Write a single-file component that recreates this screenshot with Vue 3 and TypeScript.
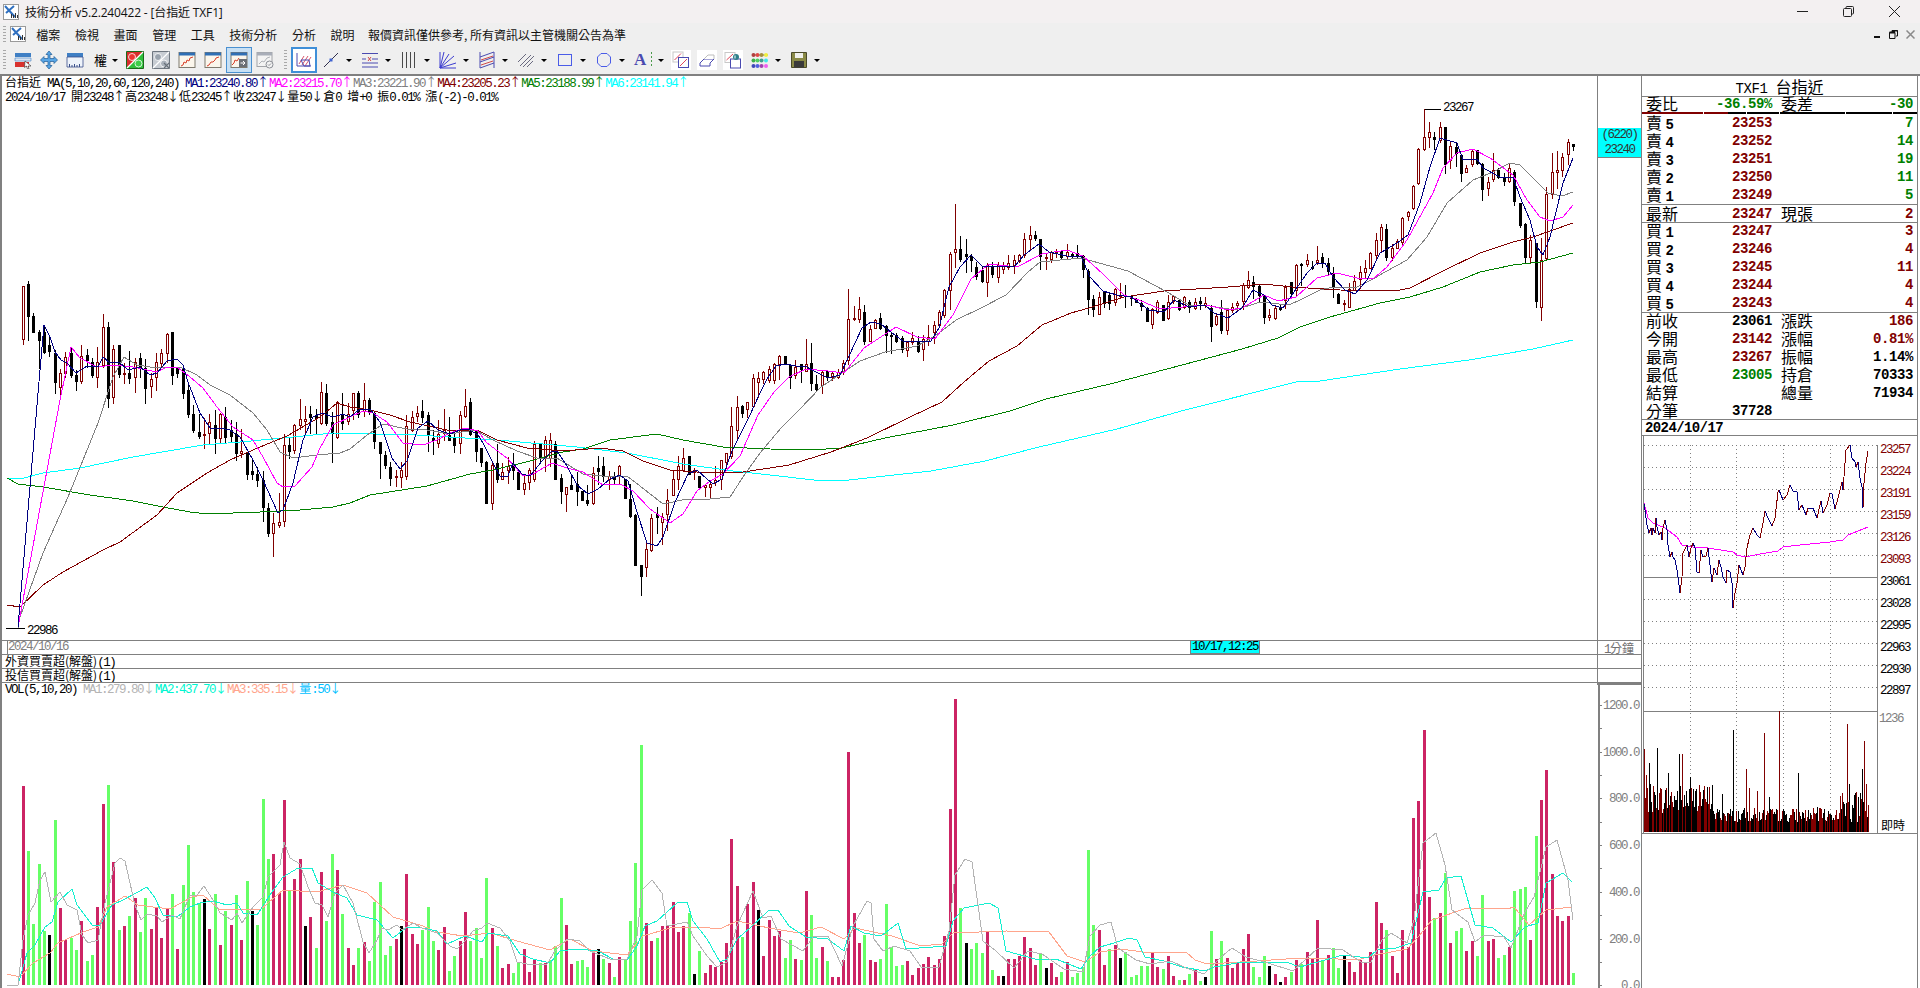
<script setup lang="ts">
const menus = ['檔案', '檢視', '畫面', '管理', '工具', '技術分析', '分析', '說明']
const notice = '報價資訊僅供參考, 所有資訊以主管機關公告為準'

const priceLegend = [
  { text: '台指近 MA(5,10,20,60,120,240) ', color: '#000' },
  { text: 'MA1:23240.80↑', color: '#000080' },
  { text: 'MA2:23215.70↑', color: '#ff00ff' },
  { text: 'MA3:23221.90↑', color: '#808080' },
  { text: 'MA4:23205.23↑', color: '#800000' },
  { text: 'MA5:23188.99↑', color: '#008000' },
  { text: 'MA6:23141.94↑', color: '#00ffff' }
]
const ohlc = '2024/10/17 開23248↑高23248↓低23245↑收23247↓量50↓倉0 增+0 振0.01% 漲(-2)-0.01%'
const volLegend = [
  { text: 'VOL(5,10,20) ', color: '#000' },
  { text: 'MA1:279.80↓', color: '#b4b4b4' },
  { text: 'MA2:437.70↓', color: '#00f5d0' },
  { text: 'MA3:335.15↓', color: '#ffa58c' },
  { text: '量:50↓', color: '#00bfff' }
]

// Latin sits on a 6px cell, CJK and arrows on a full 12px one
const runs = (text: string) =>
  (text.match(/[\u2190-\u2193\u3000-\u9fff]+|[^\u2190-\u2193\u3000-\u9fff]+/g) || []).map((t) => ({
    t,
    zh: /[\u2190-\u2193\u3000-\u9fff]/.test(t)
  }))

const candleData =
  'r 286 286 339 344;k 281 284 316 340;k 313 316 332 332;k 330 332 340 368;k 325 332 352 353;k 337 345 351 356;k 350 353 382 393;r 369 373 387 398;r 352 357 373 377;k 348 353 375 377;k 370 375 381 390;r 345 356 381 383;k 349 355 360 367;k 358 362 375 377;r 347 362 377 387;r 314 327 365 367;k 322 327 398 407;r 345 349 397 403;k 345 345 374 377;r 363 373 374 383;k 351 373 378 383;r 358 362 377 392;k 353 358 367 377;k 359 368 388 403;r 373 379 386 397;r 353 362 377 390;r 349 353 363 367;r 333 334 353 362;k 332 332 375 384;k 368 368 373 377;k 368 369 393 398;k 385 390 414 417;k 405 414 430 432;k 414 432 436 438;r 418 434 435 448;r 414 422 433 443;k 410 425 438 453;r 413 414 438 442;k 407 417 437 442;k 420 430 436 442;k 422 434 453 460;r 429 451 453 457;k 452 453 474 479;k 460 471 474 479;k 467 474 480 486;k 471 480 507 521;k 503 508 533 536;r 513 523 533 556;r 493 522 525 527;r 434 445 521 526;k 438 445 451 458;r 424 425 450 453;r 399 419 425 429;r 406 419 421 433;k 406 414 417 433;k 409 416 418 433;r 382 392 423 424;k 384 393 423 425;k 412 422 433 462;r 401 402 437 438;k 393 414 423 429;r 403 414 421 424;r 393 393 410 419;k 391 393 414 417;' +
  'r 383 400 411 416;k 398 400 411 414;k 411 413 441 448;k 442 442 453 478;k 451 455 465 468;k 462 467 478 485;r 470 476 477 486;r 462 470 477 487;r 415 426 476 479;r 411 417 430 431;r 406 413 416 421;k 400 411 417 422;k 412 415 434 451;k 430 438 440 454;r 420 434 443 447;r 409 430 433 440;k 417 435 440 440;k 434 437 445 452;r 411 415 443 453;r 389 406 416 417;k 398 402 434 435;k 430 431 451 461;k 448 448 462 466;k 461 462 503 503;r 463 465 503 509;k 444 463 479 482;r 463 472 479 479;r 457 466 470 483;k 453 465 470 479;k 472 472 489 489;r 476 483 489 494;r 468 470 482 489;r 441 444 479 481;k 444 444 457 461;r 436 440 458 471;r 433 440 458 466;k 441 444 479 479;k 474 478 491 503;r 487 487 494 511;k 476 485 489 489;k 472 484 491 505;k 491 491 500 500;k 485 500 503 505;r 467 473 503 504;k 456 468 471 484;k 457 466 476 481;r 471 476 479 489;k 472 476 479 483;r 465 466 476 484;k 479 479 498 498;k 484 499 516 517;k 514 515 565 565;k 565 565 576 595;r 542 549 567 576;r 514 518 550 551;k 507 514 517 533;r 513 517 522 544;r 489 500 514 530;r 470 479 495 495;r 456 466 479 489;r 448 458 470 471;k 456 456 474 474;r 468 470 472 479;k 476 476 487 489;r 484 485 487 496;r 480 484 487 498;r 466 480 482 485;r 460 460 479 489;r 453 453 462 468;r 407 426 456 458;r 396 407 430 438;k 405 406 413 417;r 402 402 409 417;r 374 378 406 407;r 372 378 382 397;r 371 372 379 383;r 366 369 380 382;' +
  'r 363 364 380 383;r 355 356 364 379;k 356 356 364 364;k 364 365 377 388;r 360 367 375 378;k 364 364 369 382;r 339 364 371 371;k 343 363 383 390;k 375 384 389 390;r 371 372 385 393;k 370 371 377 380;r 371 373 377 380;r 369 372 377 378;r 360 363 372 374;r 289 319 360 364;r 306 318 319 320;r 297 309 319 322;k 305 312 341 344;r 325 329 341 341;r 319 320 328 328;k 313 318 328 329;k 325 326 335 352;k 332 335 336 353;k 333 335 341 342;k 336 338 349 352;r 342 342 350 356;r 332 338 342 344;k 336 341 351 352;r 335 339 349 360;r 325 337 341 345;r 321 325 332 343;r 310 312 325 327;r 289 290 315 317;r 252 254 290 309;r 204 249 252 267;k 236 249 259 261;k 239 254 256 272;k 254 256 260 271;k 262 267 276 279;k 267 270 281 282;r 263 265 282 296;k 262 266 274 277;r 262 265 277 282;r 262 265 269 273;r 255 263 267 269;r 255 260 265 273;r 254 255 261 262;r 233 239 255 257;r 226 235 239 249;k 231 235 238 240;k 239 239 256 269;r 254 257 258 269;r 251 252 259 262;r 249 251 252 257;k 250 251 257 258;r 244 252 256 259;k 252 254 256 257;k 245 253 256 257;k 255 256 269 277;k 269 271 299 314;k 295 299 309 316;r 292 297 314 314;k 291 291 303 307;k 292 295 303 309;r 288 289 302 305;r 283 295 296 297;k 285 295 296 307;k 295 296 298 305;k 298 299 302 302;k 300 303 306 310;k 307 308 321 321;r 308 309 324 328;r 300 302 312 313;k 305 305 320 320;r 295 302 318 319;r 295 296 301 303;k 299 300 309 310;r 296 297 307 308;k 300 302 307 312;r 298 302 308 309;k 297 301 303 309;r 297 303 305 307;k 305 308 326 341;r 313 316 324 325;k 300 312 330 333;r 309 310 330 334;r 303 307 310 312;r 301 303 305 310;r 283 285 301 309;r 271 280 287 288;k 276 282 286 298;k 285 286 295 302;k 296 296 317 323;r 309 315 317 320;r 306 308 318 319;k 305 307 309 310;r 285 287 300 308;k 282 282 293 295;r 264 265 290 295;k 263 264 265 285;r 254 260 264 266;k 261 267 268 269;r 246 260 262 264;' +
  'k 253 257 263 267;k 258 263 271 274;k 267 273 287 297;k 293 294 303 303;r 300 303 304 310;r 283 289 307 307;r 275 281 290 290;r 266 272 279 288;r 260 268 272 278;r 252 253 268 268;r 233 240 255 260;r 224 227 240 252;k 224 229 257 260;r 244 248 257 260;r 239 241 248 248;r 217 218 242 245;r 211 212 216 220;r 185 186 208 209;r 148 149 183 184;r 109 137 149 150;r 122 132 137 147;k 132 137 139 149;r 122 127 140 142;k 127 127 164 173;r 142 146 160 168;k 143 147 153 166;k 154 155 173 181;r 165 168 172 172;r 149 151 164 166;k 150 150 163 164;k 163 164 189 200;r 177 182 188 195;r 153 170 179 181;k 168 170 177 178;k 173 178 181 185;r 164 168 181 182;k 170 172 201 205;k 203 203 225 227;k 223 224 257 262;r 235 240 257 262;k 243 243 301 307;r 238 260 307 320;r 187 194 258 259;r 153 172 194 198;r 151 170 172 188;r 153 157 170 176;r 139 142 154 164;k 144 144 146 150'

const volumeData =
  'r199 g134 g61 g121 g54 k50 g165 r77 r45 g47 g35 r64 g24 g30 r78 r181 g200 r123 g55 r59 g69 r87 g53 g87 r56 r78 r47 r76 g91 r36 g100 g140 g93 g82 k86 r56 g91 r40 g74 r60 g90 r45 g104 k74 g60 g186 g126 r131 r92 r185 g95 r106 r126 k59 r68 g37 r113 g64 g131 r115 g71 r37 r20 g37 r43 g24 g83 g103 g30 g39 r46 k59 r111 r51 r41 ' +
  'g55 g78 g44 r35 r58 g14 g29 r44 r73 g44 g57 g27 g107 r57 g39 r17 r21 g12 g22 r36 r13 r26 g22 r22 g25 g39 g87 r60 r21 g24 g25 g18 r34 k36 g26 r22 g8 r28 g26 g64 g122 g240 r62 r44 g47 r59 r60 r83 r53 r59 g72 k11 g34 r12 r20 r18 r23 r42 r146 r99 g48 r81 r103 k75 r29 r65 ' +
  'r49 r54 g27 g45 r26 g25 r94 g70 g27 r38 g24 r8 r8 r25 r233 r72 r42 g50 r25 r23 g26 g81 g38 g19 g20 r24 r10 r17 r21 r28 r20 r26 r49 r176 r286 g77 k42 g36 g42 g32 r54 g15 r9 k9 r26 r26 r29 r48 r37 r20 g32 k17 r22 r8 g13 r23 g8 g12 g18 g135 g60 r55 r20 g36 r40 k27 g33 g8 g10 g19 g19 r33 r18 g16 r29 r9 g5 r5 g11 r15 g4 k8 g54 r26 g44 r27 r17 r22 r36 r51 g18 g8 g29 k19 r11 k3 r8 g13 r25 g21 r33 r26 r65 ' +
  'g24 r30 g37 g17 k29 r23 r13 r25 r23 r33 r83 r62 g55 r29 r12 r55 r38 r167 r184 r255 r88 g67 r72 g112 r42 g54 g57 r34 r44 g29 g90 r44 r46 g27 g30 r38 g94 g96 g98 r45 g149 r185 r215 r111 r69 r64 r69 g12'

const MA1 =
  '18,627 40,370 44,325 50,337 55,352 61,360 67,363 76,373 87,366 98,367 103,357 110,363 119,362 128,370 140,367 150,375 157,373 167,361 177,359 183,365 188,382 200,413 210,428 220,428 230,430 240,437 253,460 263,480 278,513 283,510 293,483 303,440 313,417 322,413 333,417 343,414 350,417 360,409 370,409 380,422 392,458 400,469 407,461 418,428 428,421 438,430 450,434 460,430 468,429 478,435 483,443 493,463 500,476 508,476 513,463 522,474 530,476 542,461 552,451 557,451 567,466 577,485 588,494 598,489 610,479 620,475 628,481 637,512 647,543 657,546 663,537 675,502 688,474 697,470 707,479 713,484 722,479 732,451 750,415 760,393 767,379 776,366 785,364 796,366 805,366 814,371 828,378 840,375 849,356 862,328 871,322 881,324 892,333 903,341 917,342 931,341 939,328 949,287 960,267 971,255 983,267 997,266 1014,267 1024,255 1039,244 1049,252 1067,256 1081,256 1090,277 1103,291 1117,295 1131,297 1149,310 1164,312 1174,300 1189,307 1205,305 1214,313 1228,318 1242,308 1253,290 1264,295 1272,305 1283,308 1292,295 1307,273 1317,263 1325,263 1333,277 1345,290 1355,294 1367,280 1380,253 1397,243 1408,235 1420,203 1430,167 1440,138 1457,143 1463,160 1477,159 1483,168 1500,177 1513,177 1520,197 1530,220 1537,247 1543,255 1550,237 1563,183 1573,158'
const MA2 =
  '18,627 60,400 71,347 80,358 97,367 113,365 133,367 157,372 167,367 177,367 190,377 203,388 217,407 233,427 253,440 263,457 277,483 283,487 295,486 312,467 320,448 333,425 350,417 363,411 373,413 387,422 403,443 423,445 437,440 450,433 465,428 478,431 487,443 507,458 523,476 533,474 552,463 567,468 583,472 603,485 620,484 633,491 650,509 670,523 683,514 697,491 710,481 723,474 740,456 758,415 774,392 789,377 806,369 828,371 844,373 864,348 896,327 917,337 935,339 953,315 971,279 989,264 1017,267 1042,254 1067,250 1083,256 1103,274 1124,295 1139,300 1160,309 1206,305 1228,310 1242,308 1264,295 1278,301 1296,297 1317,278 1337,273 1357,278 1373,279 1387,267 1407,240 1433,193 1443,168 1457,153 1473,149 1490,158 1513,175 1527,200 1540,217 1550,221 1563,217 1573,205'
const MA3 =
  '7,628 18,628 20,617 43,553 68,497 98,423 113,377 124,357 137,365 157,368 180,367 197,375 210,385 230,395 253,413 267,430 280,452 293,458 317,455 340,453 350,449 367,435 383,424 407,429 427,430 450,434 475,430 493,440 517,451 537,458 557,458 583,474 603,476 627,476 640,486 663,504 687,499 710,499 730,497 745,474 760,453 781,428 799,410 821,387 842,373 860,361 885,352 917,346 935,336 956,320 981,308 1006,295 1028,272 1040,262 1081,258 1128,271 1167,292 1189,305 1210,306 1235,310 1260,302 1289,305 1300,300 1320,290 1333,287 1357,287 1373,279 1385,272 1407,260 1427,237 1447,203 1473,180 1493,172 1510,163 1520,165 1533,178 1548,193 1562,196 1573,192'
const MA4 =
  '7,605 20,607 43,585 63,572 103,550 120,542 157,515 177,493 207,473 230,460 260,447 287,436 320,417 337,403 350,407 370,410 390,415 410,422 447,430 477,430 497,440 527,448 563,451 600,448 623,451 643,461 670,470 710,473 743,472 770,468 789,465 831,452 867,438 910,417 942,402 964,382 989,361 1017,346 1042,325 1071,313 1089,308 1124,297 1164,291 1228,287 1264,284 1292,287 1340,290 1380,291 1400,290 1410,288 1443,271 1480,253 1513,242 1533,237 1573,223'
const MA5 =
  '7,478 18,484 43,487 90,495 133,501 163,507 190,512 207,514 260,512 300,510 333,507 350,503 370,495 427,486 470,474 493,470 530,461 563,452 583,449 610,440 657,434 683,440 723,447 770,449 810,450 842,448 885,438 953,425 1010,411 1046,399 1110,384 1167,369 1242,349 1278,338 1300,327 1330,317 1380,303 1410,297 1443,287 1480,272 1513,265 1540,262 1573,253'
const MA6 =
  '7,478 20,479 43,473 80,468 133,457 203,445 240,442 283,438 333,433 417,435 497,440 577,447 627,453 683,464 733,471 770,475 814,480 849,480 885,476 931,471 985,461 1039,447 1117,429 1185,410 1296,382 1320,381 1400,369 1469,360 1533,349 1573,340'

const VMA1 =
  '7,985 18,985 23,940 28,915 35,903 40,880 45,872 51,902 60,892 67,905 77,910 82,935 88,943 98,940 105,903 115,863 120,858 125,861 135,905 141,920 147,914 157,916 162,922 172,915 180,919 190,895 197,895 204,886 213,900 220,913 232,920 237,913 242,923 253,907 263,897 268,877 280,865 284,842 290,858 300,864 308,887 315,903 322,905 328,917 335,893 343,885 353,903 363,942 369,953 377,940 382,928 388,930 397,925 402,930 413,923 422,928 437,933 450,946 457,949 465,941 473,931 482,928 487,923 500,928 510,941 517,962 527,964 547,964 555,951 567,939 580,941 590,951 610,959 627,959 637,936 642,890 652,880 662,893 667,926 687,922 693,936 707,956 717,967 727,962 737,926 753,891 763,918 771,916 781,939 803,951 814,936 828,936 842,966 853,926 867,901 871,903 874,939 883,951 894,946 910,951 921,967 939,967 949,931 955,875 965,859 972,862 983,941 996,951 1014,968 1028,951 1042,954 1064,969 1083,972 1090,936 1100,925 1111,922 1118,948 1136,960 1150,964 1171,961 1186,968 1204,974 1221,957 1232,948 1246,957 1268,963 1293,971 1318,948 1343,950 1361,962 1371,962 1382,940 1391,933 1407,943 1414,920 1423,843 1436,833 1445,865 1452,910 1468,922 1475,942 1484,935 1504,937 1511,948 1525,912 1534,897 1546,847 1557,840 1568,880 1573,920'
const VMA2 =
  '7,985 18,985 27,953 35,945 45,927 52,922 58,902 72,889 77,905 93,926 100,925 112,905 125,899 147,887 155,898 163,915 177,917 190,907 200,903 213,901 227,905 237,903 243,913 257,915 272,892 283,877 298,868 312,868 318,883 333,892 347,898 357,915 377,920 393,938 407,927 422,928 437,931 447,944 465,936 482,942 488,933 508,936 520,954 533,959 550,963 560,951 577,949 598,951 613,959 628,959 637,946 645,926 657,921 677,903 687,902 693,921 707,939 720,962 727,959 737,939 750,928 769,910 778,910 789,926 806,937 828,939 844,951 851,926 864,933 881,936 898,923 906,949 946,946 953,921 964,908 989,903 998,908 1006,951 1035,959 1056,959 1081,969 1090,956 1100,947 1114,943 1129,938 1137,940 1145,957 1164,961 1182,967 1205,971 1214,967 1243,962 1286,962 1300,967 1314,963 1343,955 1368,958 1377,950 1396,948 1411,943 1423,892 1439,890 1446,878 1461,876 1475,925 1493,928 1511,942 1525,927 1538,923 1546,883 1563,873 1572,882'
const VMA3 =
  '7,974 20,977 33,963 50,953 58,943 83,932 98,927 107,907 125,896 138,905 153,907 170,909 192,897 203,895 220,910 247,909 260,910 283,890 317,892 343,885 367,893 393,917 423,926 437,932 463,936 490,933 517,941 550,950 570,939 593,951 627,955 643,936 670,928 700,927 720,929 737,921 769,928 799,933 821,927 844,939 855,928 892,936 921,946 942,944 953,933 1006,931 1049,932 1067,956 1085,962 1100,952 1121,949 1143,952 1186,952 1195,960 1207,964 1257,961 1286,959 1318,958 1357,960 1375,955 1407,949 1418,937 1432,920 1464,909 1479,908 1507,909 1514,907 1529,925 1546,910 1572,907'

const slot = (i: number, n: number) => Math.floor(23.34 + (i * 1550) / (n - 1))

const candles = candleData.split(';').map((c) => c.split(' '))
const wicks: Record<string, string> = { r: '', k: '' }
const bodies: Record<string, string> = { r: '', k: '' }
let hollow = ''
candles.forEach((c, i) => {
  const x = slot(i, candles.length)
  const [hi, top, bot, lo] = c.slice(1).map(Number)
  wicks[c[0]] += `M${x + 0.5} ${hi}V${lo + 1}`
  const h = Math.max(bot - top, 1) + 1
  bodies[c[0]] += `M${x - 1} ${top}h3v${h}h-3z`
  if (c[0] === 'r' && h > 2) hollow += `M${x} ${top + 1}h1v${h - 2}h-1z`
})

const barColors: Record<string, string> = { r: '#cc2464', g: '#66ff66', k: '#000' }
const volTokens = volumeData.split(' ')
const volBars = volTokens.map((v, i) => ({
  x: slot(i, volTokens.length) - 1,
  y: 985 - Number(v.slice(1)),
  h: Number(v.slice(1)),
  fill: barColors[v[0]]
}))

const volTicks = Array.from({ length: 13 }, (_, i) => 705 + i * 23.35)
const volLabels = ['1200.0', '1000.0', '800.0', '600.0', '400.0', '200.0', '0.0']

// order book
const sells = [
  { n: 5, p: 23253, q: 7 },
  { n: 4, p: 23252, q: 14 },
  { n: 3, p: 23251, q: 19 },
  { n: 2, p: 23250, q: 11 },
  { n: 1, p: 23249, q: 5 }
]
const buys = [
  { n: 1, p: 23247, q: 3 },
  { n: 2, p: 23246, q: 4 },
  { n: 3, p: 23245, q: 11 },
  { n: 4, p: 23244, q: 4 },
  { n: 5, p: 23243, q: 4 }
]
const stats = [
  { a: '前收', av: '23061', ac: '', b: '漲跌', bv: '186', bc: 'up' },
  { a: '今開', av: '23142', ac: 'up', b: '漲幅', bv: '0.81%', bc: 'up' },
  { a: '最高', av: '23267', ac: 'up', b: '振幅', bv: '1.14%', bc: '' },
  { a: '最低', av: '23005', ac: 'down', b: '持倉', bv: '70333', bc: '' },
  { a: '結算', av: '', ac: '', b: '總量', bv: '71934', bc: '' },
  { a: '分筆', av: '37728', ac: '', b: '', bv: '', bc: '' }
]

// intraday panel, zoomed trace
const intraRaw: [number, number][] = [
  [73, 252], [75, 270], [80, 315], [88, 340], [92, 325], [96, 345], [100, 325], [104, 340], [108, 295], [112, 320], [116, 345], [122, 335], [126, 360], [130, 325], [136, 300], [140, 330], [145, 375], [150, 410], [155, 395], [160, 410], [165, 420], [170, 450], [175, 470], [179, 520], [186, 470], [190, 400], [200, 375], [207, 410], [212, 385], [218, 370], [224, 385], [230, 455], [238, 458], [242, 390], [250, 412], [258, 408], [265, 385], [270, 435], [275, 485], [282, 445], [290, 465], [298, 420], [302, 440], [308, 470], [318, 488], [322, 450], [330, 455], [335, 490], [340, 565], [345, 520], [352, 490], [358, 435], [368, 465], [375, 440], [382, 385], [390, 345], [400, 325], [412, 345], [420, 355], [428, 310], [435, 272], [445, 295], [455, 318], [465, 295], [473, 215], [478, 210], [488, 240], [500, 225], [510, 195], [520, 212], [530, 215], [537, 270], [545, 255], [558, 285], [565, 265], [580, 265], [592, 295], [603, 242], [610, 280], [620, 255], [630, 218], [637, 222], [645, 268], [655, 235], [665, 185], [670, 210], [678, 90], [690, 75], [695, 115], [705, 125], [708, 140], [715, 125], [720, 175], [725, 200], [728, 265], [733, 190], [738, 130], [743, 92]
]
const ix = (z: number) => Math.round(1620 + z / 3)
const iy = (z: number) => Math.round(420 + z / 3)
let intraUp = ''
let intraDown = ''
intraRaw.forEach((p, i) => {
  if (!i) return
  const q = intraRaw[i - 1]
  const seg = `M${ix(q[0])} ${iy(q[1])}L${ix(p[0])} ${iy(p[1])}`
  if (p[1] < q[1]) intraUp += seg
  else intraDown += seg
})
const intraAvg = [
  [73, 250], [85, 295], [100, 310], [135, 325], [170, 350], [185, 375], [220, 380], [265, 385], [340, 395], [350, 405], [375, 410], [420, 402], [475, 392], [490, 382], [540, 375], [630, 367], [670, 360], [685, 345], [743, 322]
]
  .map((p) => `${ix(p[0])},${iy(p[1])}`)
  .join(' ')

const intraGridY = [445, 467, 489, 511, 533, 555, 599, 621, 643, 665, 687]
const intraGridX = [1690, 1736, 1783, 1830]
const intraLabels = [
  { y: 449, t: '23257', c: '#800000' }, { y: 471, t: '23224', c: '#800000' },
  { y: 493, t: '23191', c: '#800000' }, { y: 515, t: '23159', c: '#800000' },
  { y: 537, t: '23126', c: '#800000' }, { y: 559, t: '23093', c: '#800000' },
  { y: 581, t: '23061', c: '#000' }, { y: 603, t: '23028', c: '#000' },
  { y: 625, t: '22995', c: '#000' }, { y: 647, t: '22963', c: '#000' },
  { y: 669, t: '22930', c: '#000' }, { y: 690, t: '22897', c: '#000' }
]

const peaks: [number, number, string][] = [
  [73, 178, 'r'], [77, 258, 'r'], [88, 220, 'k'], [110, 175, 'k'], [145, 250, 'k'], [178, 193, 'k'], [187, 195, 'r'], [209, 262, 'k'], [228, 298, 'k'], [238, 288, 'r'], [275, 288, 'k'], [307, 315, 'k'], [340, 123, 'k'], [379, 240, 'r'], [388, 295, 'r'], [411, 305, 'r'], [431, 132, 'r'], [448, 322, 'k'], [478, 65, 'r'], [535, 252, 'k'], [590, 352, 'k'], [604, 360, 'r'], [659, 320, 'r'], [680, 105, 'r'], [688, 285, 'k'], [705, 312, 'k'], [725, 240, 'k'], [733, 155, 'r'], [737, 285, 'r']
]
let seed = 7
const rnd = () => {
  seed = (seed * 1103515245 + 12345) & 0x7fffffff
  return seed / 0x7fffffff
}
const intraVolPaths: Record<string, string> = { r: '', k: '' }
for (let x = 1644; x <= 1868; x++) {
  const span = x < 1712 ? 30 : x > 1838 ? 30 : 14
  const floor = x < 1712 ? 18 : 10
  let h = floor + rnd() * span
  let c = rnd() > 0.55 ? 'r' : 'k'
  const peak = peaks.find((p) => ix(p[0]) === x)
  if (peak) {
    h = (428 - peak[1]) / 3
    c = peak[2]
  }
  intraVolPaths[c] += `M${x + 0.5} 832V${Math.round(832 - h)}`
}
</script>

<template>
  <div class="app">
    <header class="titlebar">
      <svg class="logo" viewBox="0 0 16 16" width="16" height="16">
        <rect x="0.5" y="0.5" width="15" height="15" fill="#fff" stroke="#9a9a9a" />
        <path d="M2 2l10 11M11 2L3 9" stroke="#2f6fc0" stroke-width="2" fill="none" />
        <path d="M8 10h1v4H8zM10 11h1v3h-1zM12 9h1v5h-1zM14 11h1v3h-1z" fill="#333" />
      </svg>
      <span class="title-text">技術分析 v5.2.240422 - [台指近 TXF1]</span>
      <div class="win-btns">
        <svg viewBox="0 0 11 11" width="11" height="11"><path d="M0 5.5h11" stroke="#222" /></svg>
        <svg viewBox="0 0 11 11" width="11" height="11"><path d="M3 2V1.5A1 1 0 0 1 4 .5h5.500a1 1 0 0 1 1 1V7a1 1 0 0 1-1 1H9M1.500 2.500h6a1 1 0 0 1 1 1v6a1 1 0 0 1-1 1h-6a1 1 0 0 1-1-1v-6a1 1 0 0 1 1-1z" stroke="#222" fill="none" /></svg>
        <svg viewBox="0 0 11 11" width="11" height="11"><path d="M0 0l11 11M11 0L0 11" stroke="#222" /></svg>
      </div>
    </header>

    <nav class="menubar">
      <i class="grip"></i>
      <svg class="logo menu-logo" viewBox="0 0 16 16" width="16" height="16">
        <rect x="0.5" y="0.5" width="15" height="15" fill="#fff" stroke="#9a9a9a" />
        <path d="M2 2l10 11M11 2L3 9" stroke="#2f6fc0" stroke-width="2" fill="none" />
        <path d="M8 10h1v4H8zM10 11h1v3h-1zM12 9h1v5h-1zM14 11h1v3h-1z" fill="#333" />
      </svg>
      <span v-for="m in menus" :key="m" class="menu-item">{{ m }}</span>
      <span class="menu-notice">{{ notice }}</span>
      <div class="mdi-btns">
        <svg viewBox="0 0 8 8" width="8" height="8"><path d="M1 6h6v2H1z" fill="#111" /></svg>
        <svg viewBox="0 0 9 9" width="9" height="9"><path d="M3 2V.5h5.500V6H7M.5 2.500H6v6H.5z" stroke="#111" fill="none" /><path d="M3 .5h5.500M.5 2.500H6" stroke="#111" stroke-width="2" /></svg>
        <svg viewBox="0 0 9 9" width="9" height="9"><path d="M.5.5l8 8M8.500.5l-8 8" stroke="#8a8a8a" stroke-width="1.500" /></svg>
      </div>
    </nav>

    <div class="toolbar">
      <i class="grip tall"></i>
      <span class="tool">
        <svg viewBox="0 0 18 18"><path d="M1 2h16v4H1z" fill="#3f7fc4" /><path d="M1 7h16v3H1z" fill="#d9e4f2" stroke="#3f7fc4" stroke-width=".6" /><path d="M1 11h14v5H1z" fill="#d8322e" /><path d="M11 10l6 5-3 0 1 3-1.500 0-1-3-2 1.500z" fill="#fff" stroke="#333" stroke-width=".6" /></svg>
      </span>
      <span class="tool">
        <svg viewBox="0 0 18 18"><path d="M9 0l3 3.500h-2V7.500h4v-2L17.500 9 14 12.500v-2h-4v4h2L9 18l-3-3.500h2v-4H4v2L.5 9 4 5.500v2h4v-4H6z" fill="#58a6e6" stroke="#1f5c96" stroke-width=".7" /></svg>
      </span>
      <span class="tool">
        <svg viewBox="0 0 18 18"><path d="M1 2h16v4H1z" fill="#3f7fc4" /><path d="M1 6h16v10H1z" fill="#eef3fa" stroke="#3a4f8a" stroke-width=".8" /><path d="M3.500 16v-3M6 16v-2M8.500 16v-3M11 16v-2M13.500 16v-3" stroke="#3a4f8a" /></svg>
      </span>
      <span class="tool drop short">
        <b class="tool-zh">權</b><i class="caret"></i>
      </span>
      <span class="tool">
        <svg viewBox="0 0 18 18"><path d="M.5.500h17v17H.5z" fill="#d82c2c" stroke="#1a6a1a" /><path d="M1 17L17 1v16z" fill="#2fbe3a" /><circle cx="6" cy="6" r="3.500" fill="#e33" stroke="#fff" stroke-width=".8" /><circle cx="12.500" cy="12.500" r="3.500" fill="#3ecc48" stroke="#fff" stroke-width=".8" /><path d="M1 17L17 1" stroke="#fff" stroke-width="1.200" /></svg>
      </span>
      <span class="tool">
        <svg viewBox="0 0 18 18"><path d="M.5.500h17v17H.5z" fill="#c7ccd2" stroke="#6f7780" /><circle cx="6" cy="6" r="3.500" fill="#9aa3ad" stroke="#fff" stroke-width=".8" /><circle cx="12" cy="12.500" r="3.500" fill="#aab2bb" stroke="#fff" stroke-width=".8" /><path d="M1 17L17 1" stroke="#fff" stroke-width="1.200" /><path d="M12 12l5 5M17 12l-5 5" stroke="#68717a" stroke-width="1.200" /></svg>
      </span>
      <span class="tool">
        <svg viewBox="0 0 18 18"><rect x="1" y="1.500" width="16" height="15" fill="#fbf6ec" stroke="#7f7a6e" /><rect x="1" y="1.500" width="16" height="3" fill="#2f6fb5" /><path d="M3 15l2-1 1-3 2 1 1-3 2 1 1-3 3-1" stroke="#d8402a" fill="none" /></svg>
      </span>
      <span class="tool">
        <svg viewBox="0 0 18 18"><rect x="1" y="1.500" width="16" height="15" fill="#fbf6ec" stroke="#7f7a6e" /><rect x="1" y="1.500" width="16" height="3" fill="#2f6fb5" /><path d="M3 15l2-1 2-3 2 0 2-2 1-2 3-1" stroke="#d8402a" fill="none" /></svg>
      </span>
      <span class="tool active">
        <svg viewBox="0 0 18 18"><rect x="1" y="1.500" width="16" height="15" fill="#fbf6ec" stroke="#7f7a6e" /><rect x="1" y="1.500" width="16" height="3" fill="#2f6fb5" /><path d="M2 14l2-2 1-3 2 1 2-3" stroke="#d8402a" fill="none" /><path d="M9 8h8v8H9z" fill="#6a6f76" /><path d="M10.500 12h4M13 10l2 2-2 2" stroke="#fff" fill="none" /></svg>
      </span>
      <span class="tool">
        <svg viewBox="0 0 18 18"><rect x="1" y="1.500" width="15" height="14" fill="#f3f3f3" stroke="#a2a4a8" /><rect x="1" y="1.500" width="15" height="3" fill="#a8adb8" /><path d="M3 13l3-3 2 1 3-4 3-1" stroke="#b0b3b8" fill="none" /><circle cx="13.500" cy="13.500" r="3.500" fill="#f3f3f3" stroke="#8b8e95" /><path d="M12 13.500l1 1 2-2" stroke="#8b8e95" fill="none" /></svg>
      </span>
      <i class="grip tall second"></i>
      <span class="tool picked">
        <svg viewBox="0 0 18 18"><path d="M2 2v13h14" stroke="#4a4ab0" fill="none" /><path d="M4 13l5-8M7 14l6-9M10 15l6-9" stroke="#d8546a" /><path d="M6 9h8l1 6H9z" fill="none" stroke="#4a4ab0" /></svg>
      </span>
      <span class="tool drop">
        <svg viewBox="0 0 18 18"><path d="M2 16L16 2" stroke="#30304c" /><rect x="7.500" y="7.500" width="3" height="3" fill="#3f62d0" /></svg><i class="caret"></i>
      </span>
      <span class="tool drop">
        <svg viewBox="0 0 18 18"><path d="M1 2.500h16M1 8h4M11 8h6M1 12h16M1 16h16" stroke="#4a4ab0" /><path d="M7 6l3 4M10 6l-3 4" stroke="#d04a4a" /></svg><i class="caret"></i>
      </span>
      <span class="tool drop">
        <svg viewBox="0 0 18 18"><path d="M2.500 1v16M6.500 1v16M10.500 1v16M14.500 1v16" stroke="#4a4a4a" /></svg><i class="caret"></i>
      </span>
      <span class="tool drop">
        <svg viewBox="0 0 18 18"><path d="M1 17V1M1 17L5 1M1 17L10 3M1 17L15 5M1 17l16-5M1 17h16" stroke="#3c3cd0" fill="none" /></svg><i class="caret"></i>
      </span>
      <span class="tool drop">
        <svg viewBox="0 0 18 18"><path d="M2 1v16M2 6l14-5M2 11l14-5M2 17l14-5M16 1v16" stroke="#4a4ab0" fill="none" /><path d="M3 14l12-4M3 9l12-4" stroke="#d04a4a" /></svg><i class="caret"></i>
      </span>
      <span class="tool drop">
        <svg viewBox="0 0 18 18"><path d="M1 11l8-8M3 15L14 4M6 16l11-11M10 16l6-6" stroke="#6a6a80" fill="none" /></svg><i class="caret"></i>
      </span>
      <span class="tool drop">
        <svg viewBox="0 0 18 18"><rect x="2.500" y="3.500" width="13" height="11" fill="none" stroke="#4a5ce8" /></svg><i class="caret"></i>
      </span>
      <span class="tool drop">
        <svg viewBox="0 0 18 18"><path d="M6 2.500h6l3.500 3.500v6L12 15.500H6L2.500 12V6z" fill="none" stroke="#4a5ce8" /></svg><i class="caret"></i>
      </span>
      <span class="tool drop">
        <b class="tool-a">A</b><i class="tool-dots"></i><i class="caret"></i>
      </span>
      <span class="tool">
        <span class="white-tile"><svg viewBox="0 0 18 18"><rect x="1" y="1" width="10" height="10" fill="#fff" stroke="#c8c8c8" /><rect x="6.500" y="6.500" width="10" height="10" fill="#fff" stroke="#4a4ab0" /><path d="M2.500 9L9 2.500M8 15l7-7" stroke="#e0455a" /></svg></span>
      </span>
      <span class="tool">
        <span class="white-tile"><svg viewBox="0 0 18 18"><path d="M2 12l4-4h10l-4 4v3H2z" fill="#fff" stroke="#4a4ab0" /><path d="M6 8l4-4h6v4" fill="#fff" stroke="#bdbdbd" /></svg></span>
      </span>
      <span class="tool">
        <span class="white-tile"><svg viewBox="0 0 18 18"><rect x="1" y="1.500" width="10" height="10" fill="#fff" stroke="#c8c8c8" /><rect x="6.500" y="8" width="10" height="9" fill="#fff" stroke="#4a4ab0" /><path d="M2.500 9L9 3" stroke="#e0455a" /><circle cx="12" cy="6" r="3" fill="#2f7f8a" /><path d="M11 4.500v3" stroke="#fff" /></svg></span>
      </span>
      <span class="tool drop">
        <svg viewBox="0 0 18 18">
          <path d="M1 4h16" stroke="#8a8a30" stroke-width="1" />
          <circle cx="2.500" cy="4" r="2" fill="#b04040" /><circle cx="6.500" cy="4" r="2" fill="#e04848" /><circle cx="10.500" cy="4" r="2" fill="#a89040" /><circle cx="15" cy="4" r="2" fill="#f0f040" />
          <circle cx="2.500" cy="9.500" r="2" fill="#3fb04a" /><circle cx="6.500" cy="9.500" r="2" fill="#50d060" /><circle cx="10.500" cy="9.500" r="2" fill="#40a090" /><circle cx="15" cy="9.500" r="2" fill="#40e8e8" />
          <circle cx="2.500" cy="15" r="2" fill="#4048b8" /><circle cx="6.500" cy="15" r="2" fill="#5060e0" /><circle cx="10.500" cy="15" r="2" fill="#a040b0" /><circle cx="15" cy="15" r="2" fill="#f060f0" />
        </svg><i class="caret"></i>
      </span>
      <span class="tool drop">
        <svg viewBox="0 0 18 18"><path d="M1.500 1.500H16.500V16.500H1.500z" fill="#8a8a46" stroke="#4a4a2a" /><path d="M5 2h8v5H5z" fill="#f1f1ec" /><path d="M4 10h10v6.500H4z" fill="#3a3a3a" /></svg><i class="caret"></i>
      </span>
    </div>

    <div class="workspace">
      <section class="charts">
        <div class="price-pane">
          <div class="plot">
            <svg class="canvas" viewBox="2 76 1595 564" width="1595" height="564">
              <g shape-rendering="crispEdges">
                <path :d="wicks.r" stroke="#800000" fill="none" />
                <path :d="wicks.k" stroke="#000" fill="none" />
                <path :d="bodies.k" fill="#000" />
                <path :d="bodies.r" fill="#800000" />
                <path :d="hollow" fill="#fff" />
                <polyline :points="MA6" class="line" stroke="#00ffff" />
                <polyline :points="MA5" class="line" stroke="#008000" />
                <polyline :points="MA4" class="line" stroke="#800000" />
                <polyline :points="MA3" class="line" stroke="#808080" />
                <polyline :points="MA2" class="line" stroke="#ff00ff" />
                <polyline :points="MA1" class="line" stroke="#000080" />
                <path d="M1425 109.500h16M6 628.500h19" stroke="#000" fill="none" />
              </g>
              <text x="1443" y="111" class="mark">23267</text>
              <text x="27" y="634" class="mark">22986</text>
            </svg>
            <div class="legend">
              <div class="legend-line">
                <span v-for="seg in priceLegend" :key="seg.text" :style="{ color: seg.color }"><span v-for="(r, i) in runs(seg.text)" :key="i" :class="{ zh: r.zh }">{{ r.t }}</span></span>
              </div>
              <div class="legend-line">
                <span v-for="(r, i) in runs(ohlc)" :key="i" :class="{ zh: r.zh }">{{ r.t }}</span>
              </div>
            </div>
          </div>
          <div class="price-axis">
            <div class="price-tag">
              <span>(6220)</span>
              <span>23240</span>
            </div>
          </div>
        </div>

        <div class="strip">
          <div class="strip-main">
            <i class="date-tick"></i><span class="date-left">2024/10/16</span>
            <span class="cursor-tag">10/17,12:25</span>
          </div>
          <div class="strip-side">1<span class="zh">分鐘</span></div>
        </div>
        <div class="strip">
          <div class="strip-main"><span class="indic"><span class="zh">外資買賣超(解盤)</span>(1)</span></div>
          <div class="strip-side"></div>
        </div>
        <div class="strip">
          <div class="strip-main"><span class="indic"><span class="zh">投信買賣超(解盤)</span>(1)</span></div>
          <div class="strip-side"></div>
        </div>

        <div class="vol-pane">
          <svg class="canvas" viewBox="2 683 1639 305" width="1639" height="305">
            <g shape-rendering="crispEdges">
              <rect v-for="(b, i) in volBars" :key="i" :x="b.x" :y="b.y" width="3" :height="b.h" :fill="b.fill" />
              <polyline :points="VMA3" class="line" stroke="#ffa58c" />
              <polyline :points="VMA2" class="line" stroke="#14f0d0" />
              <polyline :points="VMA1" class="line" stroke="#b4b4b4" />
              <path d="M1598.500 683V988" stroke="#808080" stroke-width="2" fill="none" />
              <path d="M1597 683.500H1641" stroke="#808080" stroke-width="2" fill="none" />
              <path v-for="t in volTicks" :key="t" :d="`M1599 ${Math.round(t) + 0.5}h3`" stroke="#808080" />
            </g>
            <text v-for="(l, i) in volLabels" :key="l" x="1639" :y="Math.round(705 + i * 46.7) + 4" class="vol-label">{{ l }}</text>
          </svg>
          <div class="legend vol-legend">
            <div class="legend-line">
              <span v-for="seg in volLegend" :key="seg.text" :style="{ color: seg.color }"><span v-for="(r, i) in runs(seg.text)" :key="i" :class="{ zh: r.zh }">{{ r.t }}</span></span>
            </div>
          </div>
        </div>
      </section>

      <aside class="panel">
        <div class="quote-title"><span class="big-mono title-code">TXF1</span><span>台指近</span></div>
        <div class="quote-row ratio">
          <span class="lbl">委比</span><span class="num down">-36.59%</span><span class="lbl lbl2">委差</span><span class="num down">-30</span>
        </div>
        <div class="ratio-bar"><i class="ratio-red"></i><i class="ratio-black"></i></div>
        <div class="book">
          <div v-for="r in sells" :key="r.n" class="quote-row">
            <span class="lbl">賣 <span class="big-mono">{{ r.n }}</span></span><span class="num up">{{ r.p }}</span><span></span><span class="num down">{{ r.q }}</span>
          </div>
        </div>
        <div class="quote-row latest">
          <span class="lbl">最新</span><span class="num up">23247</span><span class="lbl lbl2">現張</span><span class="num up">2</span>
        </div>
        <div class="book overlap">
          <div v-for="r in buys" :key="r.n" class="quote-row">
            <span class="lbl">買 <span class="big-mono">{{ r.n }}</span></span><span class="num up">{{ r.p }}</span><span></span><span class="num up">{{ r.q }}</span>
          </div>
        </div>
        <div class="stats overlap">
          <div v-for="r in stats" :key="r.a" class="quote-row">
            <span class="lbl">{{ r.a }}</span><span class="num" :class="r.ac">{{ r.av }}</span><span class="lbl lbl2">{{ r.b }}</span><span class="num" :class="r.bc">{{ r.bv }}</span>
          </div>
        </div>
        <div class="session-date">2024/10/17</div>
        <svg class="intraday" viewBox="1642 436 275 397" width="275" height="397">
          <g shape-rendering="crispEdges" fill="none">
            <path v-for="y in intraGridY" :key="y" :d="`M1644 ${y + 0.5}H1877`" stroke="#808080" stroke-dasharray="1 3" />
            <path v-for="x in intraGridX" :key="x" :d="`M${x + 0.5} 445V832`" stroke="#808080" stroke-dasharray="1 3" />
            <path d="M1644 577.500H1877" stroke="#808080" />
            <path d="M1643.500 436V833M1877.500 445V833M1644 711.500H1877" stroke="#808080" />
            <path :d="intraVolPaths.k" stroke="#000" />
            <path :d="intraVolPaths.r" stroke="#800000" />
            <polyline :points="intraAvg" stroke="#ff00ff" stroke-width="1" />
            <path :d="intraUp" stroke="#800000" />
            <path :d="intraDown" stroke="#000080" />
          </g>
          <text v-for="l in intraLabels" :key="l.t" x="1880" :y="l.y + 4" class="mark" :fill="l.c">{{ l.t }}</text>
          <text x="1879" y="722" class="mark" fill="#808080">1236</text>
          <text x="1881" y="830" class="intra-zh">即時</text>
        </svg>
      </aside>
    </div>
  </div>
</template>

<style scoped>
.app {
  display: flex;
  flex-direction: column;
  width: 1920px;
  height: 988px;
  overflow: hidden;
  background: #efefef;
  color: #000;
  font-family: "Noto Sans CJK TC", "Noto Sans", sans-serif;
  font-size: 12px;
}

.titlebar {
  display: flex;
  align-items: center;
  height: 23px;
  padding-left: 3px;
  background: #f3f0f1;
  flex: none;
}

.title-text {
  margin-left: 6px;
  font-family: "Open Sans", "Noto Sans CJK TC", sans-serif;
  font-size: 12px;
  letter-spacing: -0.15px;
  color: #111;
}

.win-btns {
  display: flex;
  margin-left: auto;
  gap: 35px;
  padding-right: 20px;
}

.menubar {
  display: flex;
  align-items: center;
  height: 22px;
  flex: none;
  background: #efefef;
  padding-left: 3px;
}

.grip {
  display: block;
  width: 3px;
  height: 16px;
  background: repeating-linear-gradient(#a8a8a8 0 1px, #efefef 1px 3px);
}

.grip.tall {
  height: 20px;
}

.grip.second {
  margin: 0 4px 0 6px;
}

.menu-logo {
  margin-left: 4px;
  margin-right: 3px;
}

.menu-item {
  padding: 0 7.300px;
  color: #111;
}

.menu-notice {
  margin-left: 6px;
  color: #111;
}

.mdi-btns {
  display: flex;
  align-items: center;
  gap: 8px;
  margin-left: auto;
  padding-right: 5px;
}

.toolbar {
  display: flex;
  align-items: center;
  height: 29px;
  flex: none;
  padding-left: 3px;
}

.toolbar > .grip:first-child {
  margin-right: 4px;
}

.tool {
  display: flex;
  align-items: center;
  justify-content: center;
  width: 26px;
  height: 26px;
  box-sizing: border-box;
  flex: none;
  position: relative;
}

.tool svg {
  width: 18px;
  height: 18px;
}

.tool.drop {
  width: 39px;
  justify-content: flex-start;
  padding-left: 5px;
}

.tool.drop.short {
  width: 34px;
  padding-left: 3px;
}

.tool.drop .caret {
  position: absolute;
  right: 4px;
  top: 12px;
}

.caret {
  display: block;
  width: 0;
  height: 0;
  border-left: 3px solid transparent;
  border-right: 3px solid transparent;
  border-top: 3px solid #000;
}

.tool.active {
  background: #c8e0f4;
  border: 1px solid #4a90d0;
}

.tool.picked {
  background: #fff;
  border: 2px solid #3f8fd8;
}

.tool-zh {
  font-weight: 400;
  font-size: 13px;
  margin-left: 3px;
}

.tool-a {
  font-family: "Liberation Serif", serif;
  font-size: 17px;
  font-weight: 700;
  color: #4a4ab0;
  line-height: 1;
}

.tool-dots {
  position: absolute;
  left: 22px;
  top: 5px;
  width: 1px;
  height: 15px;
  background: repeating-linear-gradient(#4a9a4a 0 2px, transparent 2px 4px);
}

.white-tile {
  display: flex;
  align-items: center;
  justify-content: center;
  width: 20px;
  height: 20px;
  background: #fff;
}

.workspace {
  flex: 1;
  display: flex;
  border-top: 2px solid #808080;
  background: #fff;
  min-height: 0;
}

.charts {
  width: 1642px;
  box-sizing: border-box;
  flex: none;
  border-left: 2px solid #808080;
  border-right: 1px solid #808080;
  display: flex;
  flex-direction: column;
}

.price-pane {
  display: flex;
  height: 564px;
  flex: none;
}

.plot {
  position: relative;
  width: 1595px;
  flex: none;
}

.canvas {
  display: block;
}

.line {
  fill: none;
  stroke-width: 1;
}

.mark {
  font-family: "Liberation Mono", monospace;
  font-size: 12.500px;
  letter-spacing: -1.500px;
}

.vol-label {
  font-family: "Liberation Mono", monospace;
  font-size: 12.500px;
  letter-spacing: -1.500px;
  fill: #808080;
  text-anchor: end;
}

.intra-zh {
  font-family: "Noto Sans CJK TC", sans-serif;
  font-size: 12px;
}

.legend {
  position: absolute;
  left: 3px;
  top: -1px;
  pointer-events: none;
}

.vol-legend {
  top: -2px;
}

.legend-line {
  height: 14px;
  line-height: 14px;
  white-space: pre;
  font-family: "Liberation Mono", monospace;
  font-size: 12.500px;
  letter-spacing: -1.500px;
}

.zh {
  font-family: "Noto Sans CJK TC", sans-serif;
  font-size: 12px;
  letter-spacing: 0;
}

.price-axis {
  position: relative;
  flex: 1;
  border-left: 1px solid #808080;
}

.price-tag {
  position: absolute;
  top: 52px;
  left: 0;
  right: 0;
  height: 29px;
  background: #00ffff;
  border-bottom: 1px solid #808080;
  display: flex;
  flex-direction: column;
  align-items: center;
  justify-content: center;
  font-family: "Liberation Mono", monospace;
  font-size: 12.500px;
  letter-spacing: -1.500px;
  line-height: 15px;
  color: #333;
}

.strip {
  display: flex;
  height: 14px;
  box-sizing: border-box;
  border-top: 1px solid #808080;
  flex: none;
}

.strip-main {
  position: relative;
  width: 1595px;
  height: 13px;
  line-height: 12px;
  white-space: pre;
  flex: none;
  font-family: "Liberation Mono", monospace;
  font-size: 12.500px;
  letter-spacing: -1.500px;
}

.strip-side {
  flex: 1;
  border-left: 1px solid #808080;
  padding-left: 6px;
  line-height: 13px;
  font-family: "Liberation Mono", monospace;
  font-size: 12.500px;
  letter-spacing: -1.500px;
  color: #707070;
  white-space: pre;
}

.date-tick {
  position: absolute;
  left: 5px;
  top: 0;
  width: 1px;
  height: 13px;
  background: #808080;
}

.date-left {
  margin-left: 6px;
  color: #808080;
}

.indic {
  margin-left: 3px;
  color: #000;
}

.cursor-tag {
  position: absolute;
  left: 1188px;
  top: 0;
  width: 70px;
  height: 13px;
  line-height: 12px;
  box-sizing: border-box;
  background: #00ffff;
  border: 1px solid #808080;
  border-top: 0;
  text-align: center;
  color: #000;
}

.vol-pane {
  position: relative;
  flex: 1;
  border-top: 1px solid #808080;
  overflow: hidden;
}

.panel {
  width: 276px;
  box-sizing: border-box;
  flex: none;
  border-right: 1px solid #808080;
  display: flex;
  flex-direction: column;
  font-size: 16px;
}

.quote-title {
  height: 21px;
  box-sizing: border-box;
  border-bottom: 1px solid #808080;
  text-align: center;
  line-height: 20px;
  white-space: pre;
  flex: none;
}

.big-mono {
  font-family: "Liberation Mono", monospace;
  font-size: 14px;
  letter-spacing: -0.4px;
  font-weight: 700;
}

.title-code {
  margin-right: 8px;
  font-weight: 400;
}

.quote-row {
  display: grid;
  grid-template-columns: 40px 86px 50px 1fr;
  height: 18px;
  padding: 0 4px;
  line-height: 18px;
  flex: none;
  white-space: pre;
}

.quote-row.ratio {
  height: 15px;
  line-height: 15px;
}

.lbl {
  white-space: pre;
  margin-top: -1px;
}

.lbl2 {
  padding-left: 9px;
}

.num {
  font-family: "Liberation Mono", monospace;
  font-size: 14px;
  font-weight: 700;
  letter-spacing: -0.4px;
  text-align: right;
}

.up {
  color: #800000;
}

.down {
  color: #008000;
}

.ratio-bar {
  display: flex;
  height: 2px;
  flex: none;
}

.ratio-red {
  display: block;
  width: 86px;
  background: linear-gradient(90deg, #800000 61px, #fff 61px 62px, #800000 62px);
}

.ratio-black {
  display: block;
  flex: 1;
  background: linear-gradient(90deg, #000 18px, #fff 18px 19px, #000 19px 51px, #fff 51px 52px, #000 52px 117px, #fff 117px 118px, #000 118px 164px, #fff 164px 165px, #000 165px);
}

.book {
  flex: none;
}

.book:not(.overlap) {
  border-bottom: 1px solid #808080;
}

.quote-row.latest {
  height: 18px;
  box-sizing: border-box;
  border-bottom: 1px solid #808080;
}

.overlap {
  margin-top: -1px;
}

.book.overlap {
  border-bottom: 1px solid #808080;
}

.stats {
  height: 108px;
  flex: none;
  border-bottom: 1px solid #808080;
  box-sizing: border-box;
}

.session-date {
  height: 16px;
  flex: none;
  box-sizing: border-box;
  border-bottom: 1px solid #808080;
  padding-left: 3px;
  line-height: 16px;
  font-family: "Liberation Mono", monospace;
  font-size: 14px;
  font-weight: 700;
  letter-spacing: -0.6px;
}

.intraday {
  display: block;
  flex: none;
  border-bottom: 1px solid #808080;
}
</style>

<style>
html,
body {
  margin: 0;
  background: #fff;
  overflow: hidden;
}
</style>
